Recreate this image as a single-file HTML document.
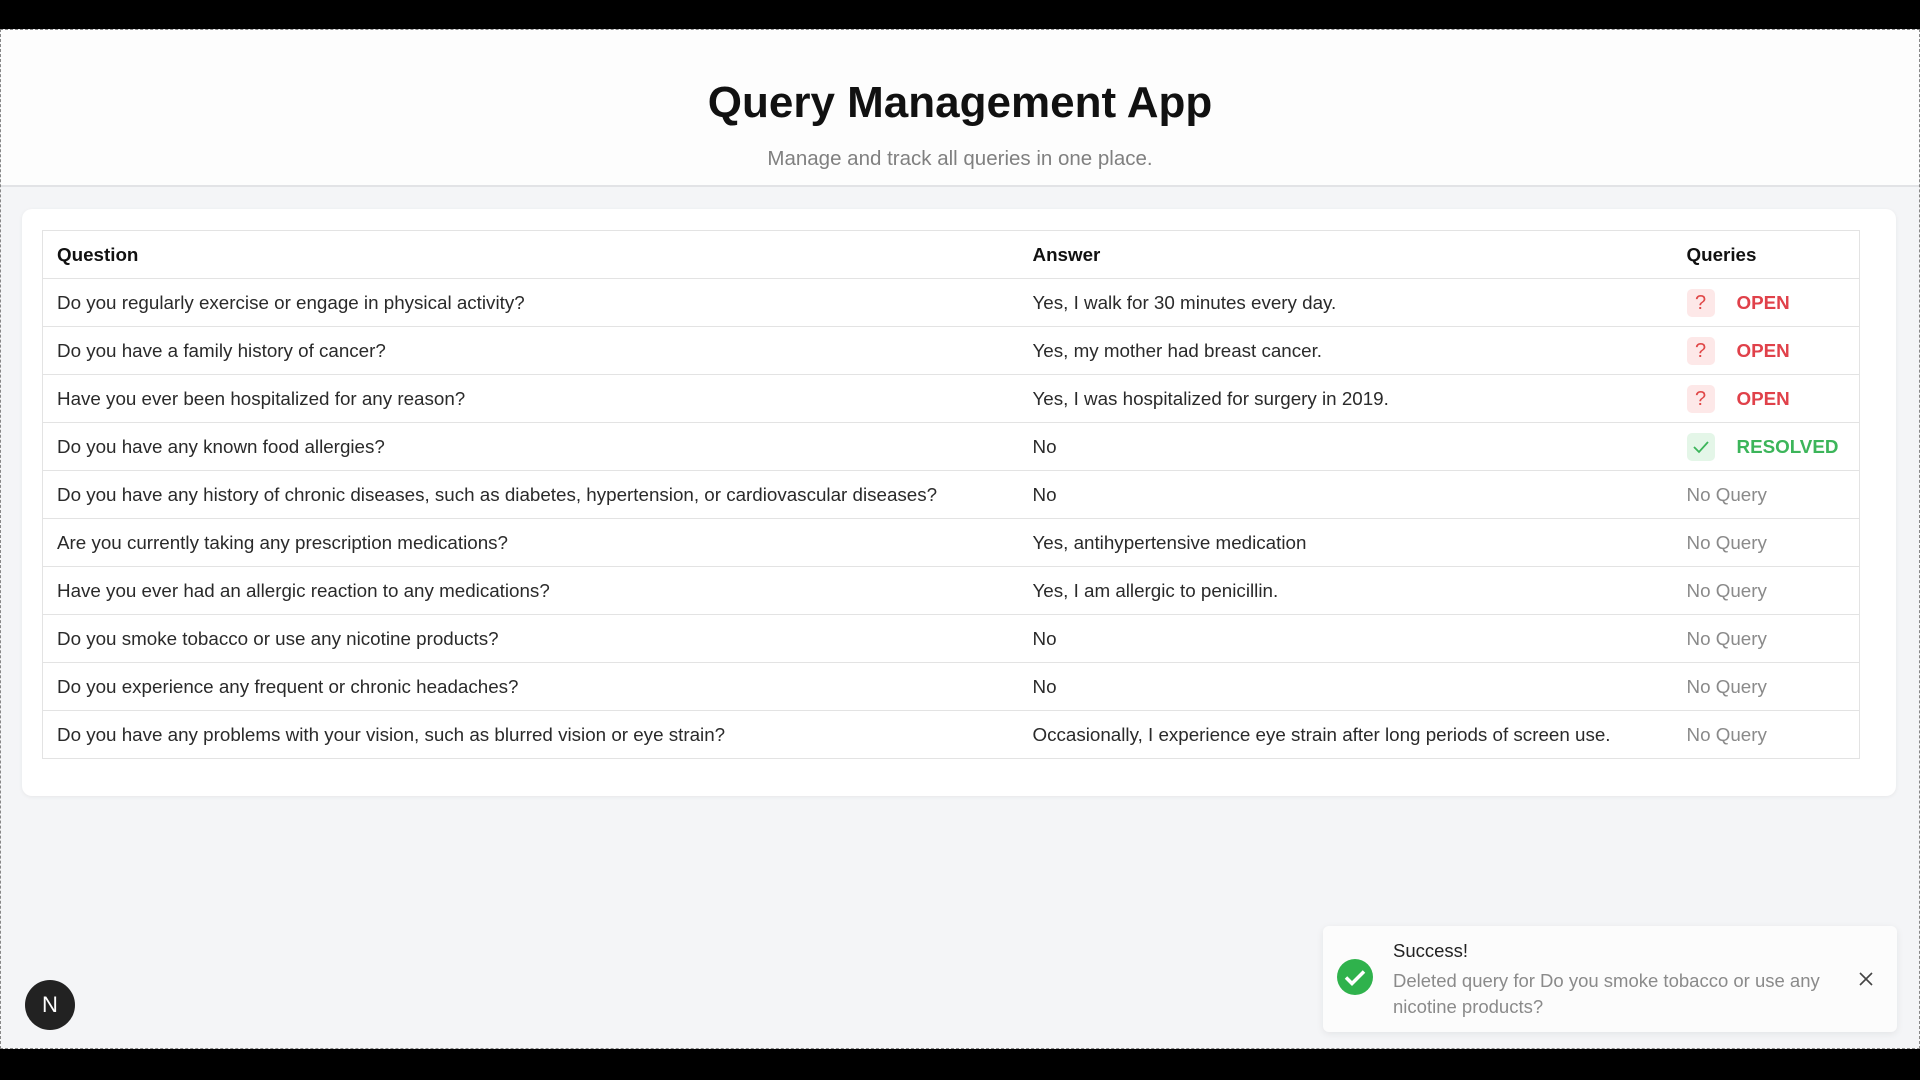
<!DOCTYPE html>
<html><head><meta charset="utf-8"><style>
*{box-sizing:border-box;margin:0;padding:0}
body{width:1920px;height:1080px;background:#000;font-family:"Liberation Sans",Arial,sans-serif;position:relative;overflow:hidden}
.page{position:absolute;left:0;top:29px;width:1920px;height:1020px;background:#f4f5f7;border:1px dashed #888;overflow:hidden}
.hdr{position:absolute;left:0;top:0;width:100%;height:157px;background:#fdfdfd;border-bottom:2px solid #e2e3e6;text-align:center}
.hdr h1{position:absolute;top:48px;width:100%;font-size:44px;font-weight:bold;color:#111}
.hdr p{position:absolute;top:117px;width:100%;font-size:20.5px;color:#808080}
.card{position:absolute;left:21px;top:179px;width:1874px;height:587px;background:#fff;border-radius:10px;box-shadow:0 1px 4px rgba(0,0,0,.06)}
table{position:absolute;left:20px;top:21px;width:1818px;border-collapse:collapse;border:1.5px solid #e3e3e3;table-layout:fixed}
td,th{height:48px;border-bottom:1.5px solid #e3e3e3;font-size:18.8px;color:#2a2a2a;text-align:left;padding:1px 0 0 14px;font-weight:normal;white-space:nowrap;overflow:visible}
th{font-weight:bold;color:#111}
.c2{width:654px}.c3{width:187px}
.ic{display:inline-block;width:28px;height:28px;border-radius:5px;vertical-align:middle;text-align:center;line-height:28px;font-size:20px;margin-right:22px}
.r{background:#fde8e8;color:#e04848}.g{background:#e4f6e8;color:#3cb55a}
.open{color:#e0414a;font-weight:bold;vertical-align:middle}
.res{color:#3cb55a;font-weight:bold;vertical-align:middle}
.nq{color:#8a8a8a}
.toast{position:absolute;left:1322px;top:896px;width:574px;height:106px;background:#fcfcfc;border-radius:6px;box-shadow:0 2px 8px rgba(0,0,0,.07)}
.toast .t{position:absolute;left:70px;top:14px;font-size:18.5px;color:#222}
.toast .m{position:absolute;left:70px;top:42px;width:450px;font-size:18.5px;color:#8a8a8a;line-height:26px}
.nb{position:absolute;left:24px;top:950px;width:50px;height:50px;border-radius:50%;background:#222;color:#fff;font-size:22px;text-align:center;line-height:50px}
</style></head><body>
<div class="page">
<div class="hdr"><h1>Query Management App</h1><p>Manage and track all queries in one place.</p></div>
<div class="card"><table>
<tr><th>Question</th><th class="c2">Answer</th><th class="c3">Queries</th></tr>
<tr><td>Do you regularly exercise or engage in physical activity?</td><td>Yes, I walk for 30 minutes every day.</td><td><span class="ic r">?</span><span class="open">OPEN</span></td></tr>
<tr><td>Do you have a family history of cancer?</td><td>Yes, my mother had breast cancer.</td><td><span class="ic r">?</span><span class="open">OPEN</span></td></tr>
<tr><td>Have you ever been hospitalized for any reason?</td><td>Yes, I was hospitalized for surgery in 2019.</td><td><span class="ic r">?</span><span class="open">OPEN</span></td></tr>
<tr><td>Do you have any known food allergies?</td><td>No</td><td><span class="ic g"><svg width="20" height="20" viewBox="0 0 20 20" style="margin-top:4px"><path d="M3 10l5 5 9-10" fill="none" stroke="#3cb55a" stroke-width="1.8"/></svg></span><span class="res">RESOLVED</span></td></tr>
<tr><td>Do you have any history of chronic diseases, such as diabetes, hypertension, or cardiovascular diseases?</td><td>No</td><td class="nq">No Query</td></tr>
<tr><td>Are you currently taking any prescription medications?</td><td>Yes, antihypertensive medication</td><td class="nq">No Query</td></tr>
<tr><td>Have you ever had an allergic reaction to any medications?</td><td>Yes, I am allergic to penicillin.</td><td class="nq">No Query</td></tr>
<tr><td>Do you smoke tobacco or use any nicotine products?</td><td>No</td><td class="nq">No Query</td></tr>
<tr><td>Do you experience any frequent or chronic headaches?</td><td>No</td><td class="nq">No Query</td></tr>
<tr><td>Do you have any problems with your vision, such as blurred vision or eye strain?</td><td>Occasionally, I experience eye strain after long periods of screen use.</td><td class="nq">No Query</td></tr>
</table></div>
<div class="nb">N</div>
<div class="toast">
<svg style="position:absolute;left:13px;top:32px" width="38" height="38" viewBox="0 0 38 38"><circle cx="19" cy="19" r="18" fill="#2fb24c"/><path d="M10 19.5l6 6 12-12" fill="none" stroke="#fff" stroke-width="3.5"/></svg>
<div class="t">Success!</div>
<div class="m">Deleted query for Do you smoke tobacco or use any nicotine products?</div>
<svg style="position:absolute;left:535px;top:45px" width="16" height="16" viewBox="0 0 16 16"><path d="M2 2l12 12M14 2L2 14" stroke="#444" stroke-width="1.6"/></svg>
</div>
</div>
</body></html>
